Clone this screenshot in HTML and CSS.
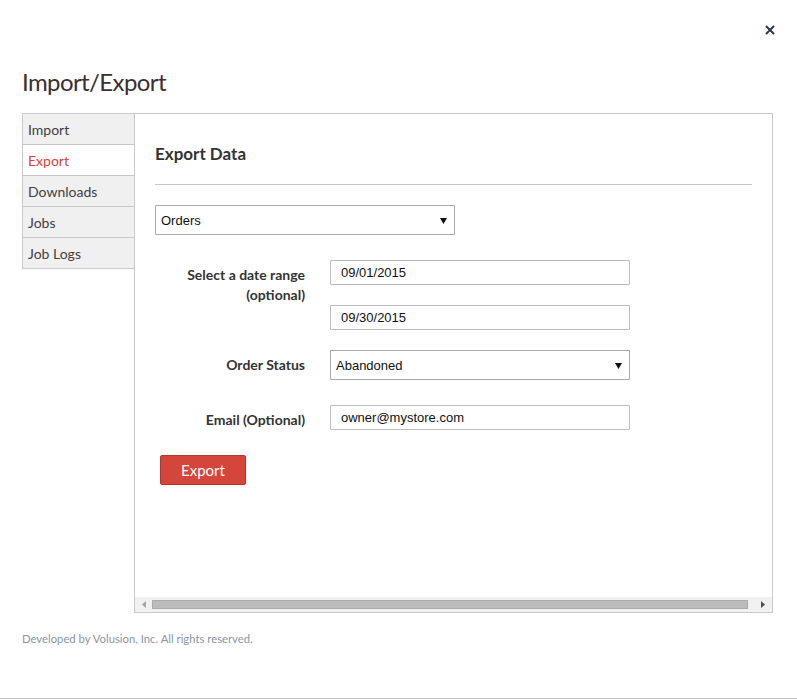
FILE: index.html
```html
<!DOCTYPE html>
<html>
<head>
<meta charset="utf-8">
<link rel="stylesheet" href="styles.css">
</head>
<body>
<div class="page">
  <div class="topbar">
    <button class="close" aria-label="Close">
      <svg width="10" height="10" viewBox="0 0 10 10"><path d="M1 1L9 9M9 1L1 9" stroke="#2b3a4a" stroke-width="2" fill="none"/></svg>
    </button>
  </div>
  <h1 class="title">Import/Export</h1>
  <div class="frame">
    <ul class="tabs">
      <li class="tab">Import</li>
      <li class="tab active">Export</li>
      <li class="tab">Downloads</li>
      <li class="tab">Jobs</li>
      <li class="tab">Job Logs</li>
    </ul>
    <div class="panel">
      <div class="panel-body">
        <h2 class="heading">Export Data</h2>
        <hr class="rule">
        <div class="select wide">
          <span>Orders</span>
          <svg width="7" height="7" viewBox="0 0 7 7"><path d="M0 1H7L3.5 7Z" fill="#111"/></svg>
        </div>
        <div class="form">
          <div class="row">
            <label class="label">Select a date range<br>(optional)</label>
            <div class="fields">
              <input class="input" type="text" value="09/01/2015">
              <input class="input" type="text" value="09/30/2015">
            </div>
          </div>
          <div class="row center">
            <label class="label">Order Status</label>
            <div class="select">
              <span>Abandoned</span>
              <svg width="7" height="7" viewBox="0 0 7 7"><path d="M0 1H7L3.5 7Z" fill="#111"/></svg>
            </div>
          </div>
          <div class="row center email">
            <label class="label">Email (Optional)</label>
            <input class="input" type="text" value="owner@mystore.com">
          </div>
        </div>
        <button class="btn">Export</button>
      </div>
      <div class="hscroll">
        <span class="arrow left"><svg width="4" height="7" viewBox="0 0 4 7"><path d="M4 0V7L0 3.5Z" fill="#a3a3a3"/></svg></span>
        <span class="thumb"></span>
        <span class="arrow right"><svg width="4" height="7" viewBox="0 0 4 7"><path d="M0 0V7L4 3.5Z" fill="#505050"/></svg></span>
      </div>
    </div>
  </div>
  <p class="footer">Developed by Volusion, Inc. All rights reserved.</p>
</div>
</body>
</html>
```

FILE: styles.css
```css
* { box-sizing: border-box; }
html, body { margin: 0; padding: 0; background: #fff; }
body {
  font-family: "Lato", "Open Sans", sans-serif;
  color: #333;
  width: 797px;
  height: 699px;
  overflow: hidden;
}
.page {
  height: 699px;
  padding: 0 24px 0 22px;
  border-bottom: 1px solid #c4c4c4;
}
.topbar {
  display: flex;
  justify-content: flex-end;
  padding-top: 25px;
  height: 66px;
  margin-right: -2px;
}
.close {
  border: 0;
  background: none;
  padding: 0;
  width: 10px;
  height: 10px;
  display: block;
}
.close svg { display: block; }
.title {
  margin: 0;
  font-weight: 400;
  font-size: 24px;
  letter-spacing: -0.6px;
  line-height: 31px;
  color: #3a3030;
  height: 47px;
}
.frame {
  display: flex;
  height: 500px;
}
.tabs {
  list-style: none;
  margin: 0;
  padding: 0;
  width: 112px;
  flex: none;
}
.tab {
  height: 32px;
  margin-top: -1px;
  border: 1px solid #c9c9c9;
  border-right: 0;
  background: #f0f0f0;
  padding: 0 0 0 5px;
  font-size: 14px;
  line-height: 31px;
  color: #404040;
}
.tab:first-child { margin-top: 0; }
.tab.active { background: #fff; color: #d9443b; }
.panel {
  flex: 1;
  border: 1px solid #c9c9c9;
  display: flex;
  flex-direction: column;
}
.panel-body {
  flex: 1;
  padding: 28px 20px 0 20px;
}
.heading {
  margin: 0;
  font-size: 17px;
  line-height: 24px;
  font-weight: 700;
  color: #333;
}
.rule {
  margin: 18px 0 20px 0;
  border: 0;
  border-top: 1px solid #c9c9c9;
  height: 0;
}
.select {
  width: 300px;
  height: 30px;
  border: 1px solid #a9a9a9;
  border-radius: 1px;
  display: flex;
  align-items: center;
  justify-content: space-between;
  padding: 0 7px 0 5px;
  font-family: "Liberation Sans", Arial, sans-serif;
  font-size: 13px;
  color: #111;
}
.select svg { display: block; }
.form {
  margin-top: 25px;
  display: flex;
  flex-direction: column;
}
.row {
  display: grid;
  grid-template-columns: 150px 300px;
  column-gap: 25px;
}
.row.center { align-items: center; margin-top: 20px; }
.row.email { margin-top: 25px; }
.label {
  text-align: right;
  font-weight: 700;
  font-size: 14px;
  line-height: 20px;
  color: #333;
  padding-top: 5px;
}
.row.center .label { padding-top: 0; }
.row.email .label { padding-top: 5px; }
.fields {
  display: flex;
  flex-direction: column;
  gap: 20px;
}
.input {
  width: 300px;
  height: 25px;
  border: 1px solid #bcbcbc;
  border-radius: 1px;
  padding: 0 10px;
  font-family: "Liberation Sans", Arial, sans-serif;
  font-size: 13px;
  color: #111;
  outline: none;
  margin: 0;
}
.btn {
  margin: 25px 0 0 5px;
  width: 86px;
  height: 30px;
  background: #d4463b;
  border: 1px solid #b8352c;
  border-radius: 2px;
  color: #fff;
  font-family: "Lato", "Open Sans", sans-serif;
  font-size: 15px;
  padding: 0;
}
.hscroll {
  height: 15px;
  background: #f1f1f1;
  display: flex;
  align-items: center;
}
.arrow {
  width: 17px;
  height: 15px;
  display: flex;
  align-items: center;
  justify-content: center;
  flex: none;
}
.arrow.right { width: 24px; justify-content: center; padding-left: 6px; }
.thumb {
  flex: 1;
  height: 9px;
  background: #bcbcbc;
  border: 1px solid #ababab;
}
.footer {
  margin: 19px 0 0 0;
  font-size: 11.3px;
  color: #8a95a2;
}
```
